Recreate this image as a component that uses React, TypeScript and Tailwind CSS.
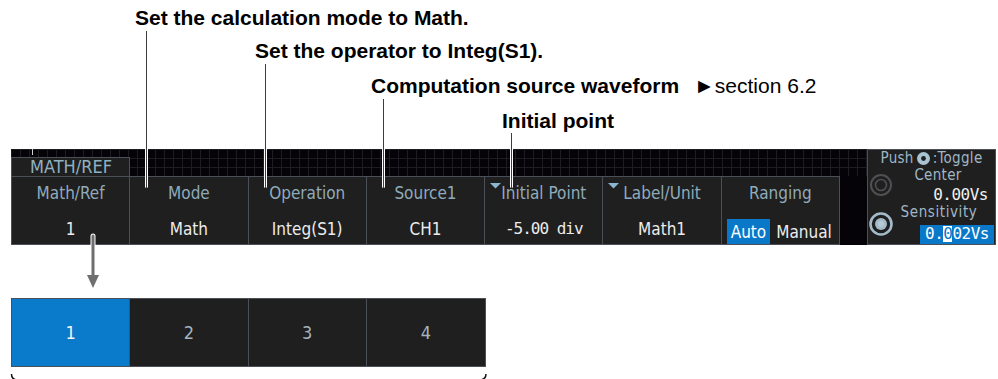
import React from 'react';

const scope = "font-['DejaVu_Sans_Condensed','DejaVu_Sans',sans-serif] font-stretch-condensed";
const mono = "font-['DejaVu_Sans_Mono',monospace] font-stretch-normal";

const menu = [
  { label: 'Math/Ref', value: '1' },
  { label: 'Mode', value: 'Math' },
  { label: 'Operation', value: 'Integ(S1)' },
  { label: 'Source1', value: 'CH1' },
  { label: 'Initial Point', value: '-5.00 div', mark: true, num: true },
  { label: 'Label/Unit', value: 'Math1', mark: true },
];

// leader line: dark on paper, white halo shows on the dark screen
const Leader = ({ x, top }: { x: number; top: number }) => (
  <div
    className="absolute flex w-[3px] justify-center rounded-b-full bg-white"
    style={{ left: x - 1, top, height: 188 - top }}
  >
    <div className="w-px bg-[#3c3c3c]" />
  </div>
);

const Knob = ({ bright }: { bright?: boolean }) =>
  bright ? (
    <svg width="26" height="26" viewBox="0 0 26 26">
      <circle cx="13" cy="13" r="10.5" fill="none" stroke="#a3bac9" strokeWidth="2.6" />
      <circle cx="13" cy="13" r="6" fill="#a3bac9" />
      <circle cx="13" cy="13" r="3" fill="#b6cad6" />
    </svg>
  ) : (
    <svg width="26" height="26" viewBox="0 0 26 26">
      <circle cx="13" cy="13" r="10" fill="none" stroke="#4f4f54" strokeWidth="2" />
      <circle cx="13" cy="13" r="5.5" fill="none" stroke="#4f4f54" strokeWidth="1.6" />
    </svg>
  );

const PushIcon = () => (
  <svg width="15" height="15" viewBox="0 0 15 15" className="mx-[2px]">
    <circle cx="7.5" cy="7.5" r="6.5" fill="#a9c3d2" />
    <circle cx="7.5" cy="7.5" r="2.4" fill="#1f1f1f" />
  </svg>
);

export default function App() {
  return (
    <div className="relative h-[379px] w-[998px] overflow-hidden bg-white">
      {/* callouts */}
      <div className="flex h-[149px] flex-col font-['Liberation_Sans',Arial,sans-serif] text-[21px] font-bold leading-[24px] text-black">
        <div className="mt-[6px] pl-[135px]">Set the calculation mode to Math.</div>
        <div className="mt-[9px] pl-[255px]">Set the operator to Integ(S1).</div>
        <div className="mt-[11px] flex items-baseline pl-[371px]">
          Computation source waveform
          <span className="ml-[15px] font-normal">►section 6.2</span>
        </div>
        <div className="mt-[11px] pl-[502px]">Initial point</div>
      </div>

      {/* scope menu */}
      <div className={`ml-[11px] flex h-[96px] w-[985px] ${scope}`}>
        <div className="flex w-[856px] flex-col bg-[#050307]">
          <div className="relative flex h-[27px] items-end bg-[linear-gradient(to_right,#1c1c22_1px,transparent_1px),linear-gradient(to_bottom,#1c1c22_1px,transparent_1px)] bg-[size:9px_9px]">
            <div className="absolute left-[21px] top-0 h-[6px] w-px bg-[#cfcfcf]" />
            <div className="h-[19px] w-[119px] border-x border-t border-[#4b4f58] bg-[#1f1f1f] pl-[18px] text-[18px] leading-[18px] text-[#8fb2c2]">
              MATH/REF
            </div>
          </div>
          <div className="flex h-[69px]">
            <div className="grid w-[829px] grid-cols-7 border-y border-l border-[#4b4f58] bg-[#1f1f1f]">
              {menu.map((m) => (
                <div
                  key={m.label}
                  className="relative flex flex-col items-center justify-between border-r border-[#4b4f58] pb-[5px] pt-[6px] text-[17px] leading-[20px]"
                >
                  {m.mark && (
                    <svg width="11" height="6" viewBox="0 0 11 6" className="absolute left-[5px] top-[6px]">
                      <polygon points="0,0 11,0 5.5,5.5" fill="#8cb6d0" />
                    </svg>
                  )}
                  <span className="text-[#8fabbb]">{m.label}</span>
                  <span className={m.num ? `${mono} text-[16px] tracking-[-1px] text-[#ececec]` : 'text-[#ececec]'}>
                    {m.value}
                  </span>
                </div>
              ))}
              <div className="flex flex-col items-center justify-between border-r border-[#4b4f58] pt-[6px] text-[17px] leading-[20px]">
                <span className="text-[#8fabbb]">Ranging</span>
                <div className="flex w-full items-center gap-[6px] pl-[5px]">
                  <span className="flex h-[25px] items-center bg-[#0a78c8] px-[4px] text-white">Auto</span>
                  <span className="text-[#ececec]">Manual</span>
                </div>
              </div>
            </div>
          </div>
        </div>

        <div className="flex h-[96px] w-[129px] flex-col border border-[#4b4f58] bg-[#1f1f1f] text-[15px] leading-[16px] tracking-[0.3px]">
          <div className="flex h-[16px] items-center justify-center text-[#9fb7c6]">
            Push
            <PushIcon />
            :Toggle
          </div>
          <div className="flex h-[37px] items-center">
            <Knob />
            <div className="flex flex-1 flex-col gap-[4px]">
              <span className="pr-[13px] text-center text-[#9fb7c6]">Center</span>
              <span className={`${mono} pr-[7px] text-right text-[16px] tracking-[-0.5px] text-[#f0f0f0]`}>0.00Vs</span>
            </div>
          </div>
          <div className="flex flex-1 items-center">
            <Knob bright />
            <div className="flex flex-1 flex-col gap-[5px]">
              <span className="pr-[11px] text-center tracking-[0.6px] text-[#9fb7c6]">Sensitivity</span>
              <div className="flex justify-end pr-[1px]">
                <span className={`${mono} flex h-[19px] items-center bg-[#0a78c8] px-[5px] text-[16px] tracking-[-0.5px] text-white`}>
                  0.<span className="bg-white text-[#0a78c8]">0</span>02Vs
                </span>
              </div>
            </div>
          </div>
        </div>
      </div>

      {/* selection list */}
      <div className={`ml-[11px] mt-[53px] grid h-[69px] w-[475px] grid-cols-4 border border-[#4b4f58] bg-[#1f1f1f] text-[18px] ${scope}`}>
        {['1', '2', '3', '4'].map((n, i) => (
          <div
            key={n}
            className={`flex items-center justify-center ${i < 3 ? 'border-r border-[#4b4f58]' : ''} ${
              i === 0 ? 'bg-[#0a7acb] text-[#f4f4f4]' : 'text-[#a3b4be]'
            }`}
          >
            {n}
          </div>
        ))}
      </div>

      <Leader x={146} top={31} />
      <Leader x={265} top={64} />
      <Leader x={383} top={99} />
      <Leader x={511} top={133} />

      <svg className="absolute left-[86px] top-[233px]" width="14" height="56" viewBox="0 0 14 56">
        <line x1="7" y1="3" x2="7" y2="44" stroke="#ffffff" strokeWidth="5" strokeLinecap="round" />
        <line x1="7" y1="3" x2="7" y2="44" stroke="#6f6f6f" strokeWidth="3" strokeLinecap="round" />
        <polygon points="1,42 13,42 7,55" fill="#6f6f6f" />
      </svg>

      <svg className="absolute left-[8px] top-[370px]" width="482" height="12" viewBox="0 0 482 12">
        <path d="M3.5 4 Q3.5 10 10 10 H471 Q478 10 478 4" fill="none" stroke="#111" strokeWidth="1.5" />
      </svg>
    </div>
  );
}
